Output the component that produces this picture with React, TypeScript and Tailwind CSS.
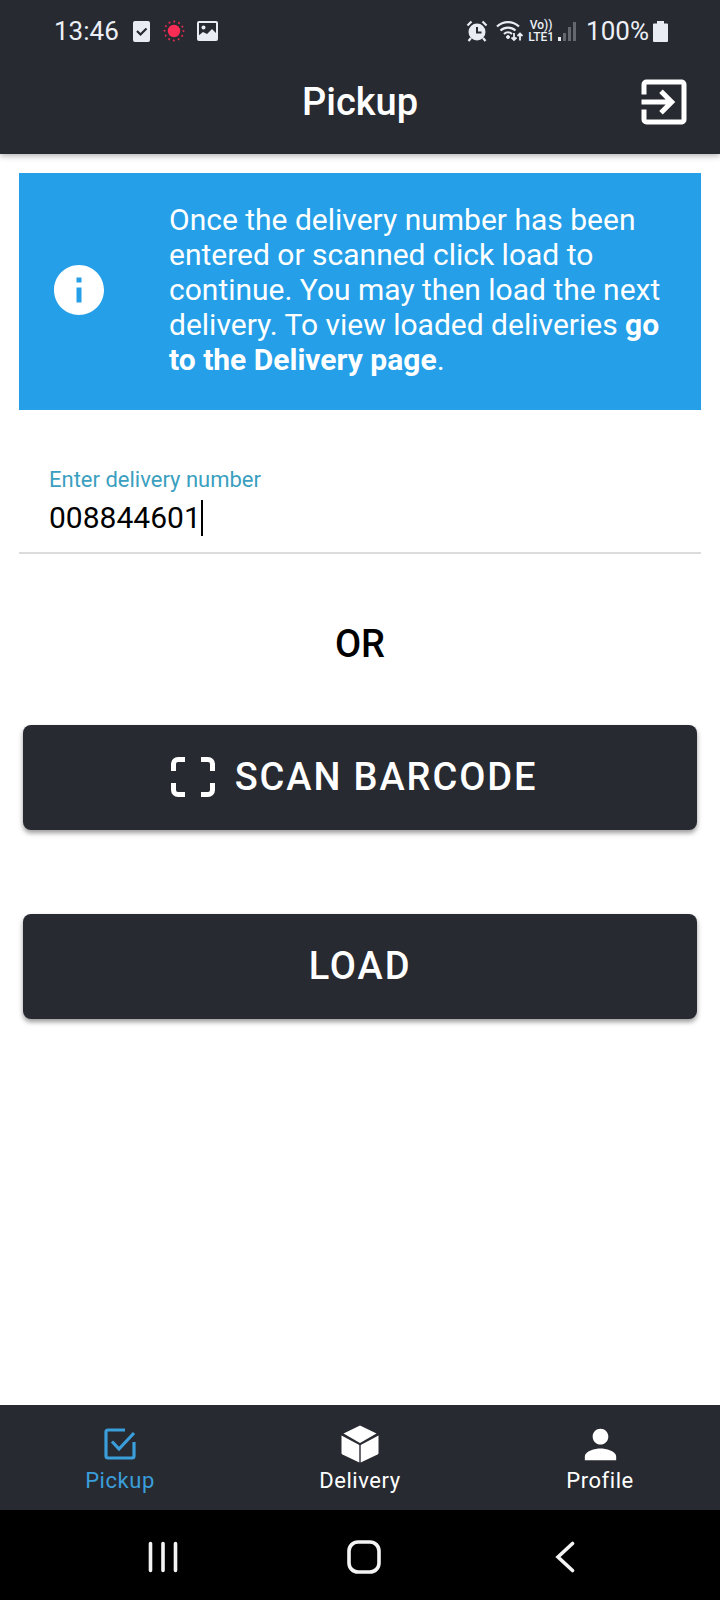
import { useState } from "react";
import { MdExitToApp, MdInfo, MdPerson } from "react-icons/md";

const StatusBar = () => (
  <div className="flex items-center justify-between pt-3 pl-[54px] pr-[52px] h-[50px] text-[26px] leading-9 text-[#eceff6]">
    <div className="flex items-center">
      <span>13:46</span>
      <svg viewBox="0 0 18 21" className="w-[18px] h-[21px] ml-3.5">
        <rect width="17" height="21" rx="2" fill="#e9ecf3" />
        <path d="M4 10l3.500 3.500L13.500 7.500" fill="none" stroke="#272a31" strokeWidth="2.200" />
      </svg>
      <svg viewBox="0 0 22 22" className="w-[22px] h-[22px] ml-3">
        <circle cx="11" cy="11" r="6.200" fill="#fb2d55" />
        <circle cx="11" cy="11" r="9.500" fill="none" stroke="#e02c4e" strokeWidth="2" strokeDasharray="0.1 4.87" strokeLinecap="round" />
      </svg>
      <svg viewBox="0 0 21 20" className="w-[21px] h-5 ml-3">
        <rect x="1" y="1" width="19" height="18" rx="1" fill="none" stroke="#e9ecf3" strokeWidth="2" />
        <circle cx="6.500" cy="6.500" r="2" fill="#e9ecf3" />
        <path d="M1 15l5-4 4 2 5-5 5 5v6H1z" fill="#e9ecf3" />
      </svg>
    </div>

    <div className="flex items-center">
      <svg viewBox="0 0 22 22" className="w-[22px] h-[22px]">
        <circle cx="11" cy="12" r="8.500" fill="#e9ecf3" />
        <path d="M1.500 5.500L5.500 1.500M20.500 5.500l-4-4M5 18l-2.500 3M17 18l2.500 3" stroke="#e9ecf3" strokeWidth="2.200" />
        <path d="M11 7v5.500h4.500" fill="none" stroke="#272a31" strokeWidth="2" />
      </svg>
      <svg viewBox="0 0 28 22" className="w-7 h-[22px] ml-2" fill="none" stroke="#e9ecf3">
        <path d="M1 6.500a16 16 0 0 1 22 0M4.500 10.500a11 11 0 0 1 15 0M8 14a6 6 0 0 1 8 0" strokeWidth="2.200" />
        <circle cx="12" cy="17" r="1.500" fill="#e9ecf3" />
        <path d="M18 13v7M15.500 17.500l2.500 2.500 2.500-2.500M24 20.500v-7M21.500 16l2.500-2.500 2.500 2.500" strokeWidth="1.800" />
      </svg>
      <div className="flex flex-col items-center ml-1 text-[12px] leading-3 font-medium">
        <span>Vo))</span>
        <span>LTE1</span>
      </div>
      <svg viewBox="0 0 20 20" className="w-5 h-5 ml-1">
        <rect x="0" y="16" width="3" height="4" fill="#e9ecf3" />
        <rect x="5" y="12" width="3" height="8" fill="#64676d" />
        <rect x="10" y="6" width="3" height="14" fill="#64676d" />
        <rect x="15" y="1" width="3" height="19" fill="#64676d" />
      </svg>
      <span className="ml-2">100%</span>
      <svg viewBox="0 0 15 21" className="w-[15px] h-[21px] ml-1">
        <path d="M4 0h7v2.500H14a1 1 0 0 1 1 1V20a1 1 0 0 1-1 1H1a1 1 0 0 1-1-1V3.500a1 1 0 0 1 1-1h3z" fill="#e9ecf3" />
      </svg>
    </div>
  </div>
);

const Header = () => (
  <header className="bg-[#272a31] text-white shadow-[0_2px_6px_rgba(0,0,0,0.3)]">
    <StatusBar />
    <div className="grid grid-cols-[1fr_auto_1fr] items-center h-[104px] px-[26px]">
      <h1 className="col-start-2 text-[38px] leading-[44px] font-medium">Pickup</h1>
      <button className="justify-self-end" aria-label="Log out">
        <MdExitToApp className="w-[60px] h-[60px]" />
      </button>
    </div>
  </header>
);

const Banner = () => (
  <div className="flex items-center bg-[#249fe8] text-white pl-[30px] pr-9 pt-[29px] pb-[33px]">
    <MdInfo className="w-[60px] h-[60px] shrink-0" />
    <p className="ml-[60px] text-[30px] leading-[35px]">
      Once the delivery number has been entered or scanned click load to continue. You may then load the next delivery. To view loaded deliveries{" "}
      <a href="#delivery" className="font-bold">go to the Delivery page</a>.
    </p>
  </div>
);

const ScanIcon = () => (
  <svg viewBox="0 0 44 40" className="w-11 h-10" fill="none" stroke="currentColor" strokeWidth="5">
    <path d="M2.500 14V7a4.500 4.500 0 0 1 4.500-4.500h7M30 2.500h7A4.500 4.500 0 0 1 41.500 7v7M41.500 26v7a4.500 4.500 0 0 1-4.500 4.500h-7M14 37.500H7A4.500 4.500 0 0 1 2.500 33v-7" />
  </svg>
);

const CheckboxIcon = () => (
  <svg viewBox="0 0 38 38" className="w-[38px] h-[38px]" fill="none" stroke="currentColor" strokeWidth="3.200" strokeLinejoin="round">
    <path d="M24 5H7a2 2 0 0 0-2 2v24a2 2 0 0 0 2 2h24a2 2 0 0 0 2-2V17" />
    <path d="M11 16.500l7 7.500L33 8" strokeLinejoin="miter" />
  </svg>
);

const CubeIcon = () => (
  <svg viewBox="0 0 38 38" className="w-[38px] h-[38px]" fill="currentColor">
    <path d="M19 0.500L35.500 8.500 19 18 2.500 8.500z" />
    <path d="M0.500 10.500L18.300 20V37.500L1.500 29.500Q0.500 29 0.500 28z" />
    <path d="M37.500 10.500L19.700 20V37.500L36.500 29.500Q37.500 29 37.500 28z" />
  </svg>
);

const tabs = [
  { name: "Pickup", icon: <CheckboxIcon /> },
  { name: "Delivery", icon: <CubeIcon /> },
  { name: "Profile", icon: <MdPerson className="w-[47px] h-[47px]" /> },
];

const buttonStyle =
  "flex items-center justify-center gap-5 h-[105px] mx-1 rounded-lg bg-[#272a31] text-white text-[38px] leading-[44px] font-medium tracking-wider shadow-[0_3px_5px_rgba(0,0,0,0.4)]";

export default function App() {
  const [number, setNumber] = useState("008844601");
  const [tab, setTab] = useState("Pickup");

  return (
    <div className="min-h-screen flex flex-col bg-white font-[Roboto,sans-serif]">
      <Header />

      <main className="flex-1 flex flex-col px-[19px] pt-[19px]">
        <Banner />

        <div className="mt-[57px] px-[30px] pb-4">
          <label htmlFor="number" className="block text-[22px] leading-[26px] text-[#3a9fc0]">Enter delivery number</label>
          <div className="flex items-center mt-[7px]">
            <input id="number" inputMode="numeric" className="field-sizing-content text-[30px] leading-9 text-black outline-none" value={number} onChange={(e) => setNumber(e.target.value)} />
            <span className="w-0.5 h-9 bg-black" />
          </div>
        </div>
        <hr className="border-t-2 border-[#dcdcdc]" />

        <p className="mt-[68px] text-center text-[38px] leading-[44px] font-medium text-black">OR</p>

        <div className="flex flex-col gap-[84px] mt-[59px]">
          <button className={`${buttonStyle} pr-3 pb-0.5`}>
            <ScanIcon />
            SCAN BARCODE
          </button>
          <button className={`${buttonStyle} pb-0.5`}>LOAD</button>
        </div>
      </main>

      <nav className="grid grid-cols-3 h-[105px] bg-[#272a31]">
        {tabs.map((t) => (
          <button key={t.name} onClick={() => setTab(t.name)} className={`flex flex-col items-center pt-[18px] ${t.name === tab ? "text-[#3a9edb]" : "text-white"}`}>
            <span className="flex items-center h-[42px]">{t.icon}</span>
            <span className="mt-0.5 text-[22px] leading-7 tracking-wide">{t.name}</span>
          </button>
        ))}
      </nav>

      <div className="grid grid-cols-3 justify-items-center items-center h-[90px] pl-[62px] pr-[54px] pt-1 bg-black text-[#f4f4f4]">
        <button aria-label="Recent apps">
          <svg viewBox="0 0 30 32" className="w-[30px] h-8" stroke="currentColor" strokeWidth="3.600" strokeLinecap="round">
            <path d="M2.500 2.500v27M15 2.500v27M27.500 2.500v27" />
          </svg>
        </button>
        <button aria-label="Home">
          <svg viewBox="0 0 34 34" className="w-[34px] h-[34px]" fill="none" stroke="currentColor" strokeWidth="3.600">
            <rect x="2" y="2" width="30" height="30" rx="9" />
          </svg>
        </button>
        <button aria-label="Back">
          <svg viewBox="0 0 20 32" className="w-5 h-8" fill="none" stroke="currentColor" strokeWidth="3.600" strokeLinecap="round">
            <path d="M17.500 2.500L3 16l14.500 13.500" />
          </svg>
        </button>
      </div>
    </div>
  );
}
